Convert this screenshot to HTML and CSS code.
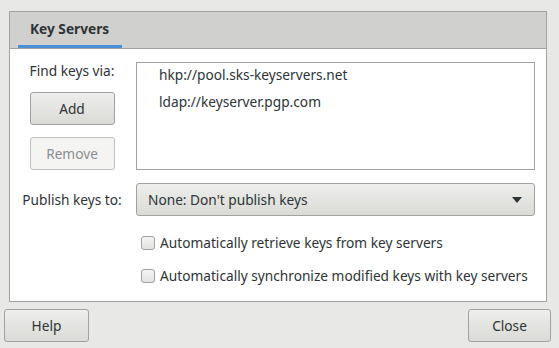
FILE: index.html
```html
<!DOCTYPE html>
<html lang="en">
<head>
    <meta charset="UTF-8">
    <title>Key Servers</title>
    <link rel="stylesheet" href="styles.css">
</head>
<body>
    <div class="dialog">
        <div class="notebook">
            <div class="tabs">
                <div class="tab active">Key Servers</div>
            </div>
            <div class="page">
                <div class="grid">
                    <div class="side">
                        <div class="side-label">Find keys via:</div>
                        <button class="btn">Add</button>
                        <button class="btn" disabled>Remove</button>
                    </div>
                    <ul class="server-list">
                        <li>hkp://pool.sks-keyservers.net</li>
                        <li>ldap://keyserver.pgp.com</li>
                    </ul>

                    <div class="row-label">Publish keys to:</div>
                    <div class="combo">
                        <span>None: Don't publish keys</span>
                        <span class="arrow"></span>
                    </div>

                    <div></div>
                    <div class="checks">
                        <label class="check"><span class="box"></span>Automatically retrieve keys from key servers</label>
                        <label class="check"><span class="box"></span>Automatically synchronize modified keys with key servers</label>
                    </div>
                </div>
            </div>
        </div>
        <div class="actions">
            <button class="btn wide">Help</button>
            <button class="btn close">Close</button>
        </div>
    </div>
</body>
</html>
```

FILE: styles.css
```css
body {
    margin: 0;
    background-color: #e8e8e7;
    font-family: "Noto Sans", "Open Sans", sans-serif;
    font-size: 13.7px;
    color: #2e3436;
}

.dialog {
    width: 559px;
    height: 348px;
    box-sizing: border-box;
    padding-top: 11px;
}

.notebook {
    margin: 0 12px 0 9px;
    border: 1px solid #a1a1a1;
    background-color: #ffffff;
}

.tabs {
    height: 36px;
    background-color: #d0d0ce;
    border-bottom: 1px solid #a1a1a1;
    padding-left: 8px;
    display: flex;
}

.tab {
    width: 104px;
    box-sizing: border-box;
    padding-left: 12px;
    line-height: 33px;
    font-weight: bold;
}

.tab.active {
    border-bottom: 3px solid #4a90d9;
}

.page {
    height: 252px;
    box-sizing: border-box;
    padding: 13px 11px 0 12px;
}

.grid {
    display: grid;
    grid-template-columns: 100px 1fr;
    column-gap: 14px;
    row-gap: 13px;
}

.side {
    display: flex;
    flex-direction: column;
    align-items: center;
    gap: 12px;
}

.side-label {
    line-height: 18px;
}

.btn {
    font-family: inherit;
    font-size: 13.7px;
    color: #2e3436;
    width: 85px;
    height: 33px;
    border: 1px solid #a1a1a1;
    border-radius: 3px;
    background: linear-gradient(#eeeeec, #dadad7);
    padding: 0;
}

.btn:disabled {
    color: #8b8e8f;
    border-color: #c0c0bd;
    background: #f4f4f2;
}

.server-list {
    list-style: none;
    margin: 0;
    padding: 0 0 0 22px;
    height: 108px;
    box-sizing: border-box;
    border: 1px solid #a1a1a1;
}

.server-list li {
    height: 27px;
    line-height: 24px;
}

.row-label {
    align-self: center;
    text-align: center;
}

.combo {
    height: 33px;
    box-sizing: border-box;
    border: 1px solid #a1a1a1;
    border-radius: 3px;
    background: linear-gradient(#eeeeec, #dadad7);
    display: flex;
    align-items: center;
    justify-content: space-between;
    padding: 0 12px 0 11px;
}

.arrow {
    width: 0;
    height: 0;
    border-left: 5px solid transparent;
    border-right: 5px solid transparent;
    border-top: 6px solid #2e3436;
}

.checks {
    display: flex;
    flex-direction: column;
    gap: 15px;
    padding: 5px 0 0 5px;
}

.check {
    display: flex;
    align-items: center;
    gap: 5px;
    line-height: 18px;
}

.box {
    width: 14px;
    height: 14px;
    box-sizing: border-box;
    border: 1px solid #a1a1a1;
    border-radius: 3px;
    background: linear-gradient(#f4f4f2, #e2e2df);
}

.actions {
    display: flex;
    justify-content: space-between;
    padding: 7px 8px 0 4px;
}

.btn.close {
    width: 83px;
}
```
